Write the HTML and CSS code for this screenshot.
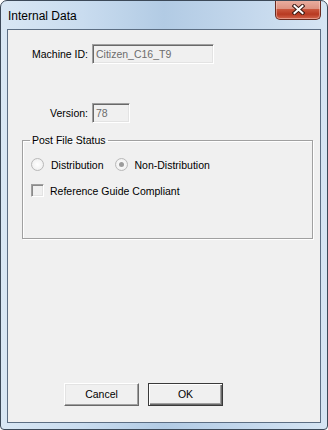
FILE: index.html
```html
<!DOCTYPE html>
<html lang="en">
<head>
<meta charset="utf-8">
<title>Internal Data</title>
<link rel="stylesheet" href="styles.css">
</head>
<body>
<div class="window">
  <div class="titlebar">
    <span class="title">Internal Data</span>
    <button class="close" aria-label="Close">
      <svg width="13" height="11" viewBox="0 0 13 11">
        <path d="M2.5 2 L10.5 9 M10.5 2 L2.5 9" stroke="#3b1a14" stroke-width="4" stroke-linecap="square" fill="none"/>
        <path d="M2.5 2 L10.5 9 M10.5 2 L2.5 9" stroke="#ffffff" stroke-width="2" stroke-linecap="square" fill="none"/>
      </svg>
    </button>
  </div>
  <div class="client">
    <div class="fields">
      <label class="lbl">Machine ID:</label>
      <div class="edit wide">Citizen_C16_T9</div>
      <label class="lbl">Version:</label>
      <div class="edit narrow">78</div>
    </div>
    <fieldset class="group">
      <legend>Post File Status</legend>
      <div class="radios">
        <span class="opt"><span class="radio"></span>Distribution</span>
        <span class="opt second"><span class="radio on"></span>Non-Distribution</span>
      </div>
      <div class="checkrow">
        <span class="opt"><span class="check"></span>Reference Guide Compliant</span>
      </div>
    </fieldset>
    <div class="buttons">
      <button class="btn">Cancel</button>
      <button class="btn default">OK</button>
    </div>
  </div>
</div>
</body>
</html>
```

FILE: styles.css
```css
html, body {
  margin: 0;
  padding: 0;
  background: #ffffff;
}

.window {
  width: 328px;
  height: 430px;
  box-sizing: border-box;
  border: 1px solid #3c4958;
  border-radius: 7px 7px 4px 4px;
  background: linear-gradient(90deg, #d9e7f4 0%, #c9dcef 25%, #b2cbe4 50%, #c3d7ec 75%, #d6e5f3 100%);
  padding: 0 6px 6px 6px;
  display: flex;
  flex-direction: column;
  overflow: hidden;
}

.titlebar {
  height: 28px;
  display: flex;
  align-items: center;
  flex: none;
}

.title {
  font-family: "Liberation Sans", Arial, sans-serif;
  font-size: 12px;
  color: #000;
  padding-left: 1px;
  margin-top: 1px;
}

.close {
  margin-left: auto;
  margin-right: 0;
  align-self: flex-start;
  margin-top: -1px;
  width: 46px;
  height: 20px;
  box-sizing: border-box;
  border: 1px solid #6a2b20;
  border-top: none;
  border-radius: 0 0 5px 5px;
  background: linear-gradient(180deg, #eab0a2 0%, #dd9382 45%, #c9553c 50%, #b83a22 75%, #d3654d 100%);
  box-shadow: inset 0 0 0 1px rgba(255, 220, 210, 0.45);
  padding: 0;
  display: flex;
  align-items: center;
  justify-content: center;
}

.client {
  flex: 1;
  border: 1px solid #5c6e83;
  background: #f0f0f0;
  display: flex;
  flex-direction: column;
  font-family: "Liberation Sans", Arial, sans-serif;
  font-size: 10.5px;
  color: #000;
}

.fields {
  display: grid;
  grid-template-columns: 80px auto;
  column-gap: 4px;
  row-gap: 39px;
  align-items: center;
  padding-top: 14px;
}

.lbl {
  text-align: right;
}

.edit {
  height: 20px;
  box-sizing: border-box;
  border: 1px solid;
  border-color: #a0a0a0 #ffffff #ffffff #a0a0a0;
  box-shadow: inset 1px 1px #696969, inset -1px -1px #e3e3e3;
  background: #f0f0f0;
  color: #6d6d6d;
  line-height: 18px;
  padding-left: 3px;
}

.wide { width: 122px; }
.narrow { width: 38px; }

.group {
  margin: 11px 7px 0 14px;
  padding: 0 0 0 8px;
  height: 105px;
  box-sizing: border-box;
  border: 1px solid #a0a0a0;
  box-shadow: inset 1px 1px #ffffff, 1px 1px #ffffff;
  min-width: 0;
}

.group legend {
  margin-left: -1px;
  padding: 0 2px;
  line-height: 12px;
}

.radios {
  display: flex;
  align-items: center;
  margin-top: 12px;
  height: 13px;
}

.checkrow {
  display: flex;
  align-items: center;
  margin-top: 13px;
  height: 13px;
}

.opt {
  display: flex;
  align-items: center;
  white-space: nowrap;
}

.opt.second {
  margin-left: 11px;
}

.radio {
  width: 11px;
  height: 11px;
  border-radius: 50%;
  border: 1px solid #b9b9b9;
  background: radial-gradient(circle at 50% 50%, #ffffff 0%, #f3f3f3 60%, #e6e6e6 100%);
  margin-right: 7px;
  position: relative;
  flex: none;
}

.radio.on::after {
  content: "";
  position: absolute;
  left: 3px;
  top: 3px;
  width: 5px;
  height: 5px;
  border-radius: 50%;
  background: #9c9c9c;
}

.check {
  width: 13px;
  height: 13px;
  box-sizing: border-box;
  border: 1px solid;
  border-color: #a0a0a0 #ffffff #ffffff #a0a0a0;
  box-shadow: inset 1px 1px #8a8a8a, inset -1px -1px #e3e3e3;
  background: #f0f0f0;
  margin-right: 6px;
  flex: none;
}

.buttons {
  margin-top: auto;
  display: flex;
  gap: 9px;
  padding: 0 0 16px 56px;
}

.btn {
  width: 75px;
  height: 23px;
  box-sizing: border-box;
  border: 1px solid;
  border-color: #ffffff #696969 #696969 #ffffff;
  box-shadow: inset -1px -1px #a0a0a0, inset 1px 1px #e3e3e3;
  background: #f0f0f0;
  font-family: "Liberation Sans", Arial, sans-serif;
  font-size: 10.5px;
  color: #000;
  padding: 0 0 1px 0;
}

.btn.default {
  border: 1px solid #3a3a3a;
  box-shadow: inset 1px 1px #ffffff, inset -1px -1px #696969, inset -2px -2px #a0a0a0;
}
```
